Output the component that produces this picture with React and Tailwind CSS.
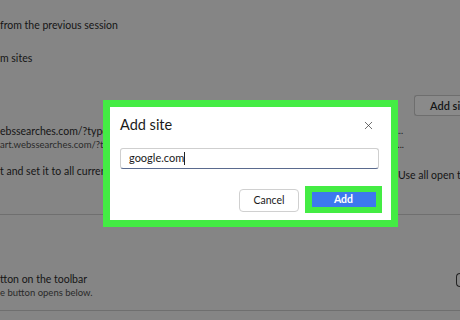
import { X } from 'lucide-react';

export default function App() {
  return (
    <div className="relative w-[460px] h-[320px] overflow-hidden bg-[#858585] text-[#151515] font-['Lato',sans-serif]">
      {/* Settings page behind the overlay */}
      <div className="flex flex-col">
        <div className="mt-[18px] text-[10.5px] leading-[14px]">from the previous session</div>
        <div className="mt-[19px] text-[10.5px] leading-[14px]">m sites</div>
        <div className="mt-[30px] flex justify-end">
          <div className="w-[46px] h-[21px] border border-[#6e6e6e] border-r-0 rounded-l-[3px] bg-[#8a8a8a] pl-[15px] text-[11px] leading-[19px] font-semibold whitespace-nowrap overflow-hidden">Add site</div>
        </div>
        <div className="mt-[8px] flex justify-between pr-[56px]">
          <div className="flex flex-col">
            <div className="text-[10.5px] leading-[14px]">ebssearches.com/?type=</div>
            <div className="text-[9.5px] leading-[14px] text-[#2a2a2a]">art.webssearches.com/?typ</div>
          </div>
          <div className="flex flex-col text-[9px] leading-[14px]">
            <span>E...</span>
            <span>A...</span>
          </div>
        </div>
        <div className="mt-[12px] flex justify-between items-start">
          <div className="text-[10.5px] leading-[14px]">t and set it to all current</div>
          <div className="text-[10.5px] leading-[14px] mt-[4px] whitespace-nowrap w-[62px]">Use all open ta</div>
        </div>
        <div className="mt-[32px] h-px bg-[#6f6f6f]"></div>
        <div className="mt-[57px] flex justify-between items-start">
          <div className="flex flex-col">
            <div className="text-[10.5px] leading-[14px]">tton on the toolbar</div>
            <div className="text-[9.5px] leading-[14px] text-[#2a2a2a]">e button opens below.</div>
          </div>
          <div className="w-[4px] h-[14px] mt-[1px] border border-r-0 border-[#222] rounded-l-full"></div>
        </div>
        <div className="mt-[10px] h-px bg-[#6f6f6f]"></div>
      </div>

      {/* Add site dialog, highlighted */}
      <div className="absolute left-[103px] top-[100px] w-[295px] h-[127px] border-[7px] border-[#44ec44] bg-white">
        <div className="flex flex-col pl-[10px] pr-[12px]">
          <div className="flex items-center justify-between h-[36px]">
            <span className="text-[14.5px] text-[#1a1a1a]">Add site</span>
            <X className="w-[13px] h-[13px] mr-[4px] text-[#333]" strokeWidth={1.3} />
          </div>
          <div className="mt-[5px] h-[21px] border border-[#cfcfcf] border-b-[#5a6a8e] rounded-[3px] pl-[8px] flex items-center text-[11px] text-[#1a1a1a]">
            google.com<span className="w-px h-[13px] bg-[#222]"></span>
          </div>
          <div className="flex justify-end items-center gap-[6px] mt-[17px] mr-[-3px]">
            <div className="w-[60px] h-[23px] mt-[2px] border border-[#d0d0d0] rounded-[4px] flex items-center justify-center text-[10.5px] text-[#1a1a1a]">Cancel</div>
            <div className="w-[77px] h-[27px] bg-[#44ec44] flex items-center justify-center">
              <div className="w-[64px] h-[15px] bg-[#3d78ee] flex items-center justify-center text-[10.5px] font-bold text-white">Add</div>
            </div>
          </div>
        </div>
      </div>
    </div>
  );
}
